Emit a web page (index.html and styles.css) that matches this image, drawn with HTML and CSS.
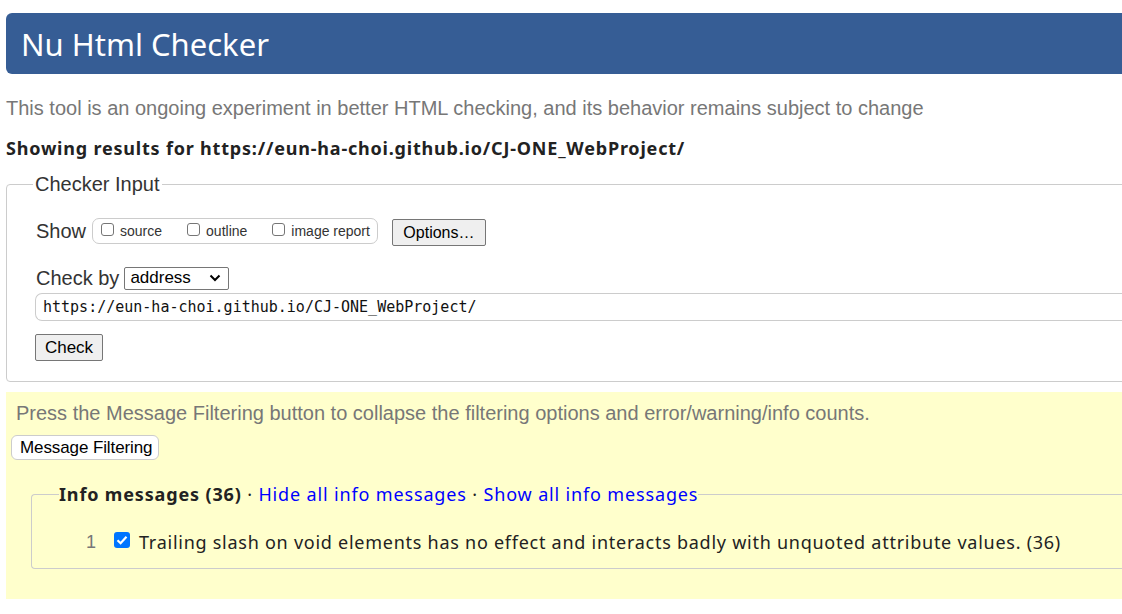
FILE: index.html
```html
<!DOCTYPE html>
<html lang="en">
<head>
<meta charset="utf-8">
<title>Nu Html Checker</title>
<link rel="stylesheet" href="styles.css">
</head>
<body>
<div class="page">
  <h1 class="banner">Nu Html Checker</h1>
  <p class="tagline">This tool is an ongoing experiment in better HTML checking, and its behavior remains subject to change</p>
  <p class="results">Showing results for https://eun-ha-choi.github.io/CJ-ONE_WebProject/</p>

  <fieldset class="input-box">
    <legend class="box-legend">Checker Input</legend>
    <div class="show-row">
      <span class="label">Show</span>
      <span class="show-group">
        <label class="opt"><span class="cb"></span>source</label>
        <label class="opt"><span class="cb"></span>outline</label>
        <label class="opt"><span class="cb"></span>image report</label>
      </span>
      <span class="btn options">Options…</span>
    </div>
    <div class="checkby-row">
      <span class="label">Check by</span>
      <span class="select">address<svg class="chev" width="12" height="8" viewBox="0 0 12 8"><path d="M1.5 1.5 L6 6 L10.5 1.5" fill="none" stroke="#000" stroke-width="2"/></svg></span>
    </div>
    <div class="url">https://eun-ha-choi.github.io/CJ-ONE_WebProject/</div>
    <div class="check-row"><span class="btn check">Check</span></div>
  </fieldset>

  <div class="filter-area">
    <p class="filter-note">Press the Message Filtering button to collapse the filtering options and error/warning/info counts.</p>
    <span class="filter-btn">Message Filtering</span>
    <fieldset class="info-box">
      <legend class="info-legend"><b>Info messages (36)</b> · <a href="#">Hide all info messages</a> · <a href="#">Show all info messages</a></legend>
      <div class="msg-row">
        <span class="num">1</span>
        <span class="cb checked"><svg width="16" height="16" viewBox="0 0 16 16"><path d="M3.5 8.2 L6.6 11.2 L12.5 4.8" fill="none" stroke="#fff" stroke-width="2.2"/></svg></span>
        <span class="msg">Trailing slash on void elements has no effect and interacts badly with unquoted attribute values. (36)</span>
      </div>
    </fieldset>
  </div>
</div>
</body>
</html>
```
FILE: styles.css
```css
html, body {
  margin: 0;
  padding: 0;
  background: #fff;
  overflow: hidden;
}
.page {
  width: 1200px;
  padding: 13px 0 0 6px;
  font-family: "Liberation Sans", Arial, sans-serif;
}
.banner {
  margin: 0;
  height: 61px;
  box-sizing: border-box;
  background: #365d95;
  color: #fff;
  border-radius: 6px 0 0 6px;
  padding: 12px 0 0 15px;
  font-family: "Noto Sans", sans-serif;
  font-weight: 400;
  font-size: 31px;
  line-height: 38px;
}
.tagline {
  margin: 21px 0 0;
  color: #777;
  font-size: 20px;
  line-height: 26px;
}
.results {
  margin: 15px 0 0;
  color: #222;
  font-family: "Noto Sans", sans-serif;
  font-weight: 700;
  font-size: 18px;
  letter-spacing: 0.8px;
  line-height: 24px;
}
.input-box {
  margin: 12px 0 0;
  border: 1px solid #ccc;
  border-radius: 4px;
  padding: 0 0 20px 29px;
  min-width: 0;
}
.box-legend {
  padding: 0 2px;
  margin-left: -3px;
  color: #333;
  font-size: 20px;
  line-height: 24px;
}
.show-row {
  display: flex;
  align-items: center;
  margin-top: 21px;
  height: 28px;
}
.label {
  color: #333;
  font-size: 20px;
  line-height: 24px;
}
.show-group {
  display: flex;
  align-items: center;
  margin-left: 6px;
  height: 26px;
  border: 1px solid #ccc;
  border-radius: 7px;
  padding: 0 7px 0 8px;
  box-sizing: border-box;
}
.opt {
  display: flex;
  align-items: center;
  font-size: 14px;
  color: #333;
  margin-right: 25px;
}
.opt:last-child { margin-right: 0; }
.cb {
  display: inline-block;
  width: 13px;
  height: 13px;
  border: 1px solid #767676;
  border-radius: 3px;
  box-sizing: border-box;
  margin: 0 6px 3px 0;
  background: #fff;
}
.btn {
  display: inline-flex;
  align-items: center;
  justify-content: center;
  box-sizing: border-box;
  background: #efefef;
  border: 1px solid #767676;
  border-radius: 2px;
  color: #000;
  font-size: 16px;
}
.options {
  margin-left: 14px;
  width: 94px;
  height: 27px;
  margin-top: 3px;
}
.checkby-row {
  display: flex;
  align-items: center;
  margin-top: 21px;
}
.select {
  display: inline-flex;
  align-items: center;
  justify-content: space-between;
  box-sizing: border-box;
  margin-left: 5px;
  width: 105px;
  height: 23px;
  border: 1px solid #767676;
  border-radius: 2px;
  padding: 0 7px 0 5px;
  font-size: 17px;
  color: #000;
}
.chev { display: block; }
.url {
  margin-top: 3px;
  margin-left: -1px;
  height: 28px;
  box-sizing: border-box;
  border: 1px solid #ccc;
  border-right: 0;
  border-radius: 7px 0 0 7px;
  padding: 0 0 0 7px;
  font-family: "DejaVu Sans Mono", monospace;
  font-size: 15px;
  line-height: 26px;
  color: #111;
}
.check-row {
  margin-top: 13px;
  margin-left: -1px;
}
.check {
  width: 68px;
  height: 27px;
  font-size: 17px;
}
.filter-area {
  margin-top: 10px;
  background: #ffffcc;
  padding: 8px 0 30px 10px;
}
.filter-note {
  margin: 0;
  color: #777;
  font-size: 20px;
  line-height: 26px;
}
.filter-btn {
  display: inline-block;
  margin: 9px 0 0 -5px;
  box-sizing: border-box;
  height: 25px;
  padding: 0 6px 0 8px;
  background: #fff;
  border: 1px solid #ccc;
  border-radius: 6px;
  font-size: 17px;
  letter-spacing: -0.1px;
  line-height: 23px;
  color: #000;
}
.info-box {
  margin: 22px 0 0 15px;
  border: 1px solid #ccc;
  border-radius: 4px;
  border-right: 0;
  padding: 24px 0 14px 0;
  min-width: 0;
}
.info-legend {
  padding: 0;
  margin-left: 27px;
  font-family: "Noto Sans", sans-serif;
  font-size: 18px;
  letter-spacing: 0.85px;
  line-height: 24px;
  color: #222;
}
.info-legend b { font-weight: 700; }
.info-legend a { color: #00f; text-decoration: none; }
.msg-row {
  display: flex;
  align-items: center;
}
.num {
  width: 64px;
  text-align: right;
  font-family: "Liberation Sans", Arial, sans-serif;
  font-size: 18px;
  color: #777;
}
.cb.checked {
  width: 16px;
  height: 16px;
  border: 0;
  border-radius: 3px;
  background: #0075ff;
  margin: 0 0 4px 18px;
}
.cb.checked svg { display: block; }
.msg {
  margin-left: 9px;
  font-family: "Noto Sans", sans-serif;
  font-size: 18px;
  letter-spacing: 0.74px;
  color: #222;
}
```
